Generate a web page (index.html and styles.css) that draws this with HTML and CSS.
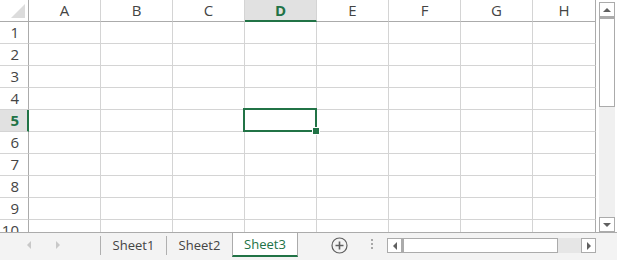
FILE: index.html
```html
<!DOCTYPE html>
<html lang="en">
  <head>
    <meta charset="UTF-8" />
    <meta name="viewport" content="width=device-width, initial-scale=1.0" />
    <title>Workbook</title>
    <link rel="stylesheet" href="styles.css">
  </head>
  <body>
    <div class="app">
      <div class="main">
        <div id="sheet" class="sheet"></div>
        <div class="vscroll">
          <div class="sbtn"><span class="tri-up"></span></div>
          <div class="vthumb"></div>
          <div class="vtrack"></div>
          <div class="sbtn"><span class="tri-down"></span></div>
        </div>
      </div>

      <div class="tabbar">
        <div class="tabnav">
          <span class="nav-left"></span>
          <span class="nav-right"></span>
        </div>
        <div class="tab">Sheet1</div>
        <div class="tab">Sheet2</div>
        <div class="tab active">Sheet3</div>
        <div class="add-sheet">
          <svg width="17" height="17" viewBox="0 0 17 17">
            <circle cx="8.5" cy="8.5" r="7.5" fill="none" stroke="#5f5f5f" stroke-width="1.2" />
            <path d="M8.5 4.5v8M4.5 8.5h8" stroke="#5f5f5f" stroke-width="1.6" />
          </svg>
        </div>
        <div class="split-dots">
          <span></span><span></span><span></span>
        </div>
        <div class="hscroll">
          <div class="sbtn-h"><span class="tri-left"></span></div>
          <div class="hthumb"></div>
          <div class="htrack"></div>
          <div class="sbtn-h"><span class="tri-right"></span></div>
        </div>
      </div>
    </div>

    <script>
      document.addEventListener("DOMContentLoaded", function () {
        const sheet = document.getElementById("sheet");
        const cols = ["A", "B", "C", "D", "E", "F", "G", "H"];
        let html = '<div class="cell corner"><span class="corner-tri"></span></div>';

        cols.forEach((c) => {
          const sel = c === "D" ? " selected" : "";
          const last = c === "H" ? " last" : "";
          html += `<div class="cell colhead${sel}${last}">${c}</div>`;
        });

        for (let r = 1; r <= 10; r++) {
          const rowSel = r === 5 ? " selected" : "";
          html += `<div class="cell rowhead${rowSel}">${r}</div>`;
          cols.forEach((c) => {
            const last = c === "H" ? " last" : "";
            const active = r === 5 && c === "D" ? " active" : "";
            html += `<div class="cell${last}${active}"></div>`;
          });
        }

        sheet.innerHTML = html;
      });
    </script>
  </body>
</html>
```

FILE: styles.css
```css
body {
  margin: 0;
  padding: 0;
  font-family: "Open Sans", "Noto Sans", sans-serif;
  background-color: #fff;
  color: #444;
}

.app {
  width: 617px;
  height: 260px;
  display: flex;
  flex-direction: column;
  overflow: hidden;
}

.main {
  display: flex;
  height: 232px;
}

/* grid */

.sheet {
  width: 596px;
  height: 232px;
  display: grid;
  grid-template-columns: 29px repeat(7, 72px) 63px;
  grid-template-rows: 22px repeat(10, 22px);
  overflow: hidden;
}

.cell {
  box-sizing: border-box;
  border-right: 1px solid #d4d4d4;
  border-bottom: 1px solid #d4d4d4;
  position: relative;
}

.cell.last {
  border-right-color: #ababab;
}

.colhead {
  border-bottom-color: #ababab;
  text-align: center;
  font-size: 15px;
  line-height: 21px;
}

.colhead.selected {
  background-color: #e1e1e1;
  border-bottom: 2px solid #217346;
  color: #217346;
  font-weight: bold;
  line-height: 20px;
}

.rowhead {
  border-right-color: #ababab;
  text-align: right;
  padding-right: 9px;
  font-size: 15px;
  line-height: 21px;
}

.rowhead.selected {
  background-color: #e1e1e1;
  border-right: 2px solid #217346;
  padding-right: 8px;
  color: #217346;
  font-weight: bold;
}

.corner {
  border-right-color: #ababab;
  border-bottom-color: #ababab;
}

.corner-tri {
  position: absolute;
  right: 3px;
  bottom: 3px;
  width: 0;
  height: 0;
  border-left: 14px solid transparent;
  border-bottom: 14px solid #dcdcdc;
}

.cell.active::after {
  content: "";
  position: absolute;
  left: -2px;
  top: -2px;
  right: -1px;
  bottom: -1px;
  border: 2px solid #217346;
  z-index: 2;
}

.cell.active::before {
  content: "";
  position: absolute;
  right: -4px;
  bottom: -4px;
  width: 6px;
  height: 6px;
  background-color: #217346;
  border: 1px solid #fff;
  z-index: 3;
}

/* vertical scrollbar */

.vscroll {
  width: 21px;
  box-sizing: border-box;
  padding: 2px 3px 0 3px;
  display: flex;
  flex-direction: column;
}

.sbtn {
  box-sizing: border-box;
  width: 16px;
  height: 15px;
  border: 1px solid #ababab;
  background-color: #fff;
  display: flex;
  align-items: center;
  justify-content: center;
}

.vthumb {
  box-sizing: border-box;
  width: 16px;
  height: 90px;
  border: 1px solid #ababab;
  border-top-width: 2px;
  background-color: #fff;
}

.vtrack {
  width: 16px;
  flex: 1;
  background-color: #f0f0f0;
}

.tri-up,
.tri-down {
  width: 0;
  height: 0;
  border-left: 4px solid transparent;
  border-right: 4px solid transparent;
}

.tri-up {
  border-bottom: 4px solid #606060;
}

.tri-down {
  border-top: 4px solid #606060;
}

/* sheet tabs */

.tabbar {
  height: 28px;
  box-sizing: border-box;
  border-top: 1px solid #ababab;
  background-color: #f3f3f3;
  display: flex;
  align-items: flex-start;
}

.tabnav {
  width: 100px;
  height: 24px;
  display: flex;
  align-items: center;
  padding-left: 27px;
  box-sizing: border-box;
  gap: 25px;
}

.nav-left,
.nav-right {
  width: 0;
  height: 0;
  border-top: 4px solid transparent;
  border-bottom: 4px solid transparent;
}

.nav-left {
  border-right: 4px solid #c8c8c8;
}

.nav-right {
  border-left: 4px solid #c8c8c8;
}

.tab {
  box-sizing: border-box;
  width: 66px;
  height: 19px;
  margin-top: 3px;
  border-left: 1px solid #b0b0b0;
  text-align: center;
  font-size: 13px;
  line-height: 19px;
  color: #444;
}

.tab.active {
  height: 24px;
  margin-top: 0;
  background-color: #fff;
  border-left: 1px solid #ababab;
  border-right: 1px solid #ababab;
  border-bottom: 2px solid #217346;
  color: #217346;
  line-height: 23px;
}

.add-sheet {
  margin-left: 33px;
  margin-top: 4px;
  height: 17px;
}

.split-dots {
  margin-left: 23px;
  margin-top: 6px;
  display: flex;
  flex-direction: column;
  gap: 2px;
}

.split-dots span {
  width: 2px;
  height: 2px;
  background-color: #a8a8a8;
}

/* horizontal scrollbar */

.hscroll {
  margin-left: 14px;
  margin-top: 5px;
  width: 209px;
  height: 15px;
  display: flex;
}

.sbtn-h {
  box-sizing: border-box;
  width: 15px;
  height: 15px;
  border: 1px solid #ababab;
  background-color: #fff;
  display: flex;
  align-items: center;
  justify-content: center;
}

.hthumb {
  box-sizing: border-box;
  width: 156px;
  height: 15px;
  border: 1px solid #ababab;
  border-left-width: 2px;
  background-color: #fff;
}

.htrack {
  flex: 1;
  background-color: #e6e6e6;
}

.tri-left,
.tri-right {
  width: 0;
  height: 0;
  border-top: 4px solid transparent;
  border-bottom: 4px solid transparent;
}

.tri-left {
  border-right: 4px solid #606060;
}

.tri-right {
  border-left: 4px solid #606060;
}
```
